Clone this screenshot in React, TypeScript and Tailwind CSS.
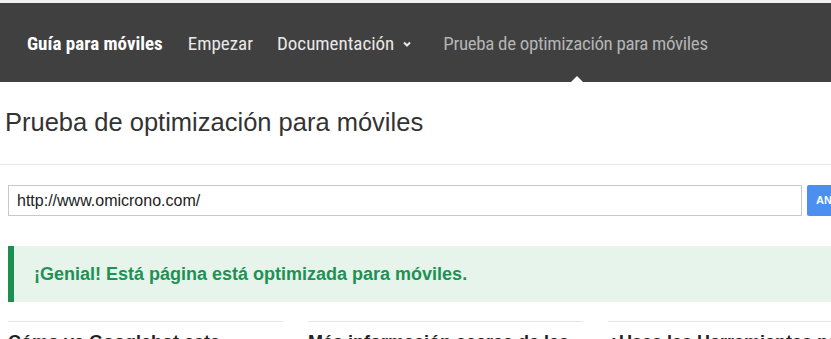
import React from "react";

const nav = '"Roboto Condensed", "Liberation Sans Narrow", Roboto, sans-serif';
const arial = '"Liberation Sans", Arial, sans-serif';

export default function App() {
  return (
    <div className="w-[831px] h-[339px] overflow-hidden bg-white" style={{ fontFamily: arial }}>
      <div className="h-[3px] bg-[#f1f1f1]" />
      <div className="h-[79px] bg-[#404040] flex items-center pl-[27px] pt-[3px] text-[19px]" style={{ fontFamily: nav }}>
        <span className="font-bold text-white">Guía para móviles</span>
        <span className="ml-[25px] text-[#e8e8e8]">Empezar</span>
        <span className="ml-[24px] text-[#e8e8e8] flex items-center">
          Documentación
          <svg className="ml-[8px]" width="10" height="8" viewBox="0 0 10 8">
            <path d="M2 2.5 L5 5.5 L8 2.5" stroke="#e8e8e8" strokeWidth="2" fill="none" />
          </svg>
        </span>
        <span className="ml-[31px] text-[#b4b4b4] relative self-stretch flex items-center tracking-[-0.35px]">
          Prueba de optimización para móviles
          <span className="absolute bottom-0 left-[128px] w-0 h-0 border-l-[6px] border-r-[6px] border-b-[6px] border-l-transparent border-r-transparent border-b-white" />
        </span>
      </div>
      <div className="h-[83px] border-b border-[#e8e8e8] pl-[5px] pt-[25px]">
        <h1 className="text-[25.5px] leading-[30px] text-[#333]">Prueba de optimización para móviles</h1>
      </div>
      <div className="flex pl-[8px] pt-[20px] gap-[5px]">
        <div className="w-[794px] shrink-0 h-[31px] border border-[#c8c8c8] flex items-center pl-[8px] text-[16px] text-[#222]">
          http://www.omicrono.com/
        </div>
        <div className="w-[40px] shrink-0 h-[31px] bg-[#4d8ff0] rounded-l-[2px] text-white font-bold text-[11px] flex items-center pl-[9px] overflow-hidden whitespace-nowrap">
          AN
        </div>
      </div>
      <div className="ml-[8px] mt-[30px] h-[56px] bg-[#e6f4ec] border-l-[6px] border-[#1b8e50] flex items-center pl-[20px] text-[18px] font-bold text-[#1e9153]">
        ¡Genial! Está página está optimizada para móviles.
      </div>
      <div className="flex pl-[8px] pt-[19px] gap-[25px]">
        {["Cómo ve Googlebot esta", "Más información acerca de las", "¿Usas las Herramientas para webmasters?"].map((t) => (
          <div key={t} className="w-[275px] shrink-0 border-t border-[#e5e5e5] pt-[7px] text-[18px] font-bold text-[#222] whitespace-nowrap">
            {t}
          </div>
        ))}
      </div>
    </div>
  );
}
